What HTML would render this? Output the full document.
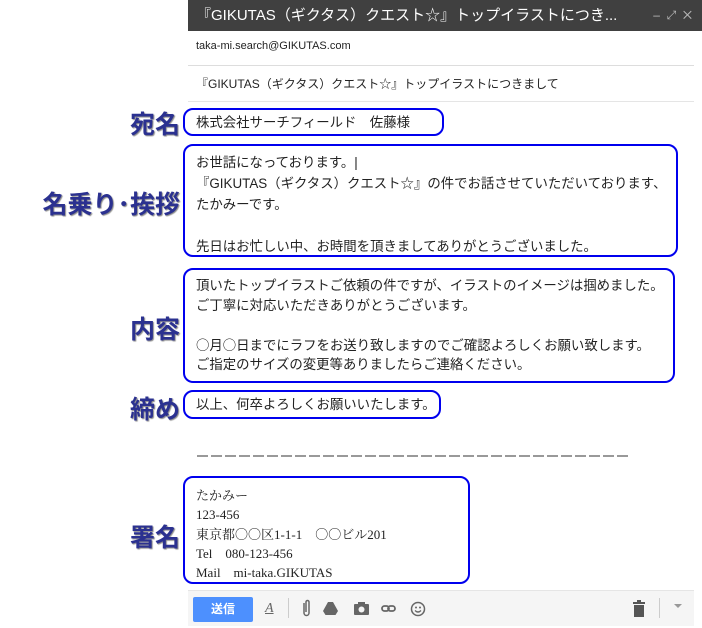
<!DOCTYPE html>
<html><head><meta charset="utf-8"><style>
body{margin:0;width:702px;height:628px;background:#fff;position:relative;overflow:hidden;font-family:"Liberation Sans","Noto Sans CJK JP",sans-serif;color:#222}
.a{position:absolute;white-space:nowrap}
.hdr{left:188px;top:0;width:514px;height:31px;background:#404040;color:#fff;font-size:15px;line-height:31px}
.box{position:absolute;border:2.5px solid #0000ee;border-radius:10px;box-sizing:border-box}
.lab{position:absolute;font-size:25px;font-weight:bold;color:#2b3190;text-shadow:1px 1px 1px #888;white-space:nowrap;text-align:right;right:522px}
.t{font-size:13.4px;line-height:19px}
.serif{font-family:"Liberation Serif","Noto Serif CJK SC",serif;font-size:13px;line-height:19px}
.cj{font-family:"Noto Sans CJK JP",sans-serif}
</style></head><body>
<div class="a hdr"><span style="padding-left:8px">『GIKUTAS（ギクタス）クエスト☆』トップイラストにつき...</span><span style="position:absolute;right:10px;color:#bbb;font-size:12px">–&nbsp;&nbsp;⤢&nbsp;&nbsp;✕</span></div>
<div class="a" style="left:196px;top:40px;font-size:11px;color:#222">taka-mi.search@GIKUTAS.com</div>
<div class="a" style="left:188px;top:65px;width:506px;border-top:1px solid #ddd"></div>
<div class="a" style="left:196px;top:75px;font-size:12px">『GIKUTAS（ギクタス）クエスト☆』トップイラストにつきまして</div>
<div class="a" style="left:188px;top:101px;width:506px;border-top:1px solid #e5e5e5"></div>

<div class="lab" style="top:105px">宛名</div>
<div class="lab" style="top:185px">名乗り･挨拶</div>
<div class="lab" style="top:310px">内容</div>
<div class="lab" style="top:390px">締め</div>
<div class="lab" style="top:518px">署名</div>

<div class="box" style="left:183px;top:108px;width:261px;height:28px"></div>
<div class="a t" style="left:196px;top:113px">株式会社サーチフィールド　佐藤様</div>

<div class="box" style="left:183px;top:144px;width:495px;height:113px"></div>
<div class="a t" style="left:196px;top:152px;line-height:21px">お世話になっております。|<br>『GIKUTAS（ギクタス）クエスト☆』の件でお話させていただいております、<br>たかみーです。<br><br>先日はお忙しい中、お時間を頂きましてありがとうございました。</div>

<div class="box" style="left:183px;top:268px;width:492px;height:115px"></div>
<div class="a t" style="left:196px;top:276px;line-height:19.5px">頂いたトップイラストご依頼の件ですが、イラストのイメージは掴めました。<br>ご丁寧に対応いただきありがとうございます。<br><br><span class="cj">○</span>月<span class="cj">○</span>日までにラフをお送り致しますのでご確認よろしくお願い致します。<br>ご指定のサイズの変更等ありましたらご連絡ください。</div>

<div class="box" style="left:183px;top:390px;width:258px;height:29px"></div>
<div class="a t" style="left:196px;top:395px">以上、何卒よろしくお願いいたします。</div>

<div class="a" style="left:197px;top:455px;width:432px;height:2px;background:repeating-linear-gradient(90deg,#999 0 11px,transparent 11px 14px)"></div>

<div class="box" style="left:183px;top:476px;width:287px;height:108px"></div>
<div class="a serif" style="left:196px;top:486px">たかみー<br>123-456<br>東京都<span class="cj">○○</span>区1-1-1　<span class="cj">○○</span>ビル201<br>Tel　080-123-456<br>Mail　mi-taka.GIKUTAS</div>

<div class="a" style="left:188px;top:590px;width:506px;height:35px;background:#f5f5f5;border-top:1px solid #e5e5e5"></div>
<div class="a" style="left:193px;top:597px;width:60px;height:25px;background:#4d90fe;border-radius:2px;color:#fff;font-weight:bold;font-size:12px;line-height:25px;text-align:center">送信</div>
<div class="a" style="left:265px;top:601px;font-family:'Liberation Serif',serif;font-style:italic;font-size:14px;color:#666;text-decoration:underline">A</div>
<div class="a" style="left:288px;top:598px;height:20px;border-left:1px solid #ccc"></div>
<svg class="a" style="left:298px;top:598px" width="130" height="22" viewBox="0 0 130 22" fill="#666">
<path d="M6 5v10a2.5 2.5 0 0 0 5 0V4a1.5 1.5 0 0 0-3 0v10" fill="none" stroke="#666" stroke-width="1.5"/>
<path d="M30 4h5l5 9-2.5 4h-10L25 13z"/>
<rect x="56" y="6" width="15" height="11" rx="1"/><circle cx="63.5" cy="11.5" r="3" fill="#f5f5f5"/><rect x="60" y="4" width="7" height="3"/>
<rect x="84" y="8" width="7" height="5" rx="2.5" fill="none" stroke="#666" stroke-width="1.8"/><rect x="90" y="8" width="7" height="5" rx="2.5" fill="none" stroke="#666" stroke-width="1.8"/>
<circle cx="120" cy="11" r="6.5" fill="none" stroke="#666" stroke-width="1.5"/><circle cx="118" cy="9.5" r="1"/><circle cx="122" cy="9.5" r="1"/><path d="M117 12.5q3 3 6 0" fill="none" stroke="#666" stroke-width="1.3"/>
</svg>
<svg class="a" style="left:632px;top:600px" width="14" height="18" viewBox="0 0 14 18" fill="#555"><rect x="2" y="5" width="10" height="12"/><rect x="1" y="2" width="12" height="2"/><rect x="5" y="0" width="4" height="2"/></svg>
<div class="a" style="left:659px;top:598px;height:20px;border-left:1px solid #ccc"></div>
<div class="a" style="left:674px;top:604px;width:0;height:0;border-left:4px solid transparent;border-right:4px solid transparent;border-top:4px solid #999"></div>
</body></html>
